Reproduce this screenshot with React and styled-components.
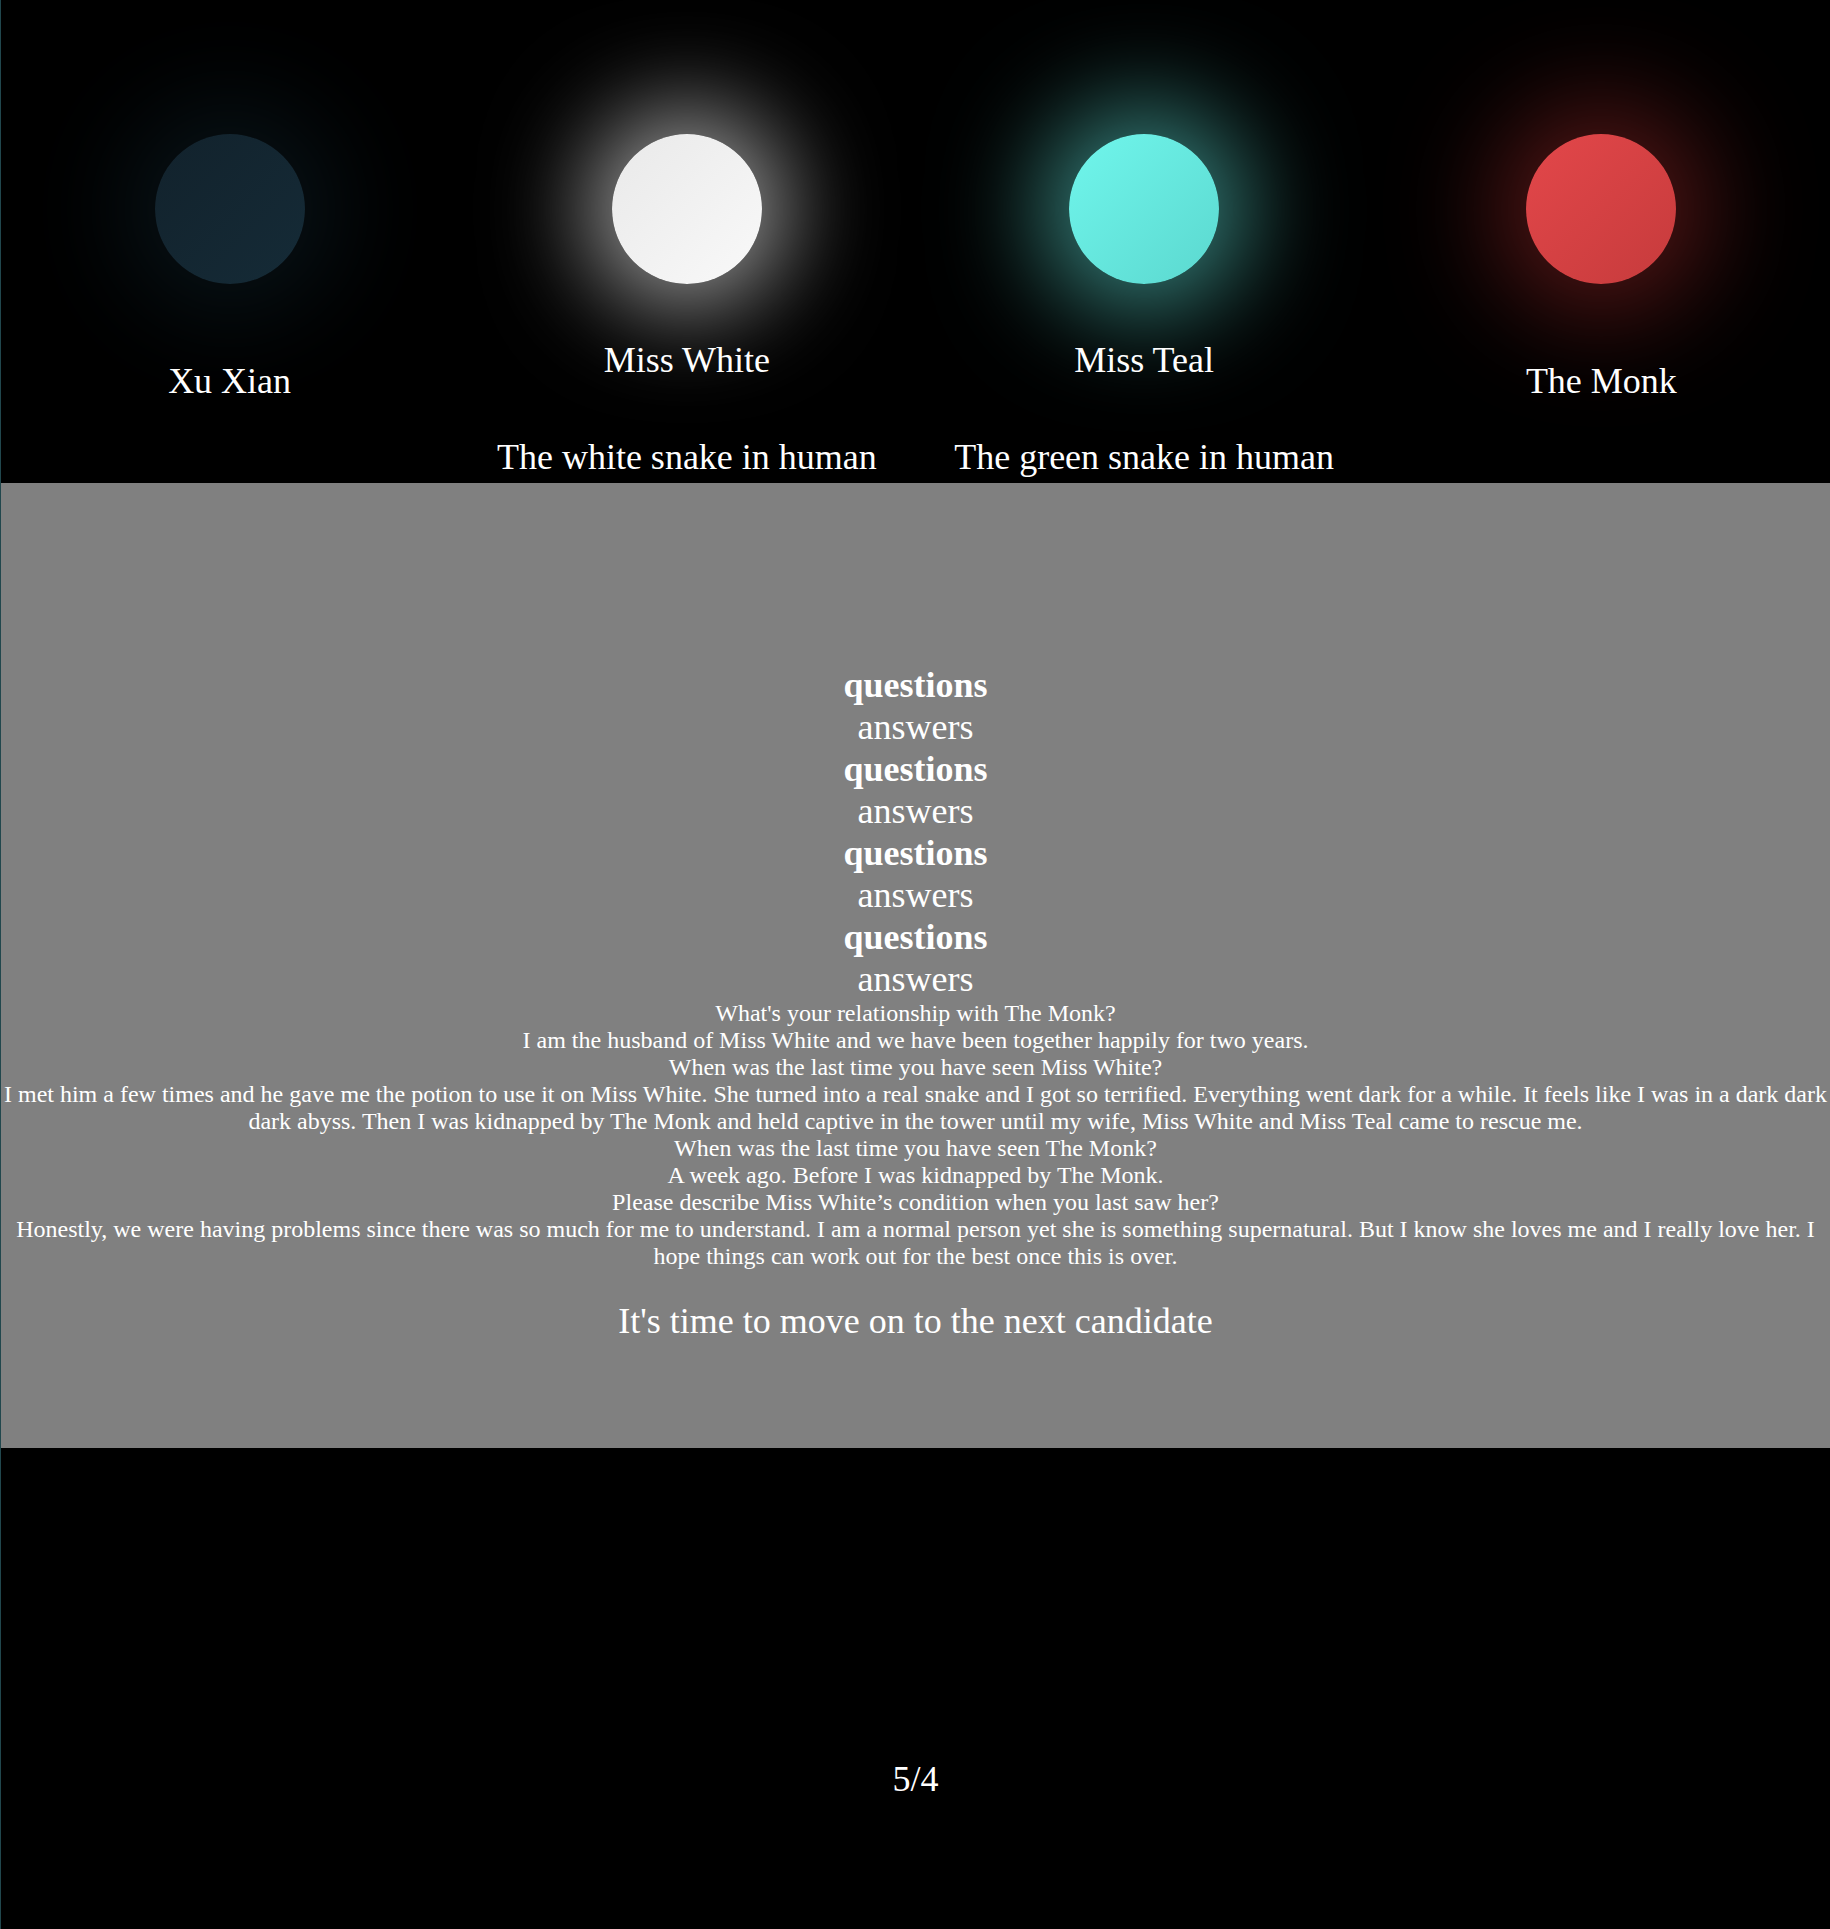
import React from "react";
import styled, { createGlobalStyle } from "styled-components";

const GlobalStyle = createGlobalStyle`
  html, body {
    margin: 0;
    padding: 0;
    background: #000;
  }
  body {
    font-family: "Liberation Serif", "Times New Roman", serif;
    color: #fff;
  }
`;

const Page = styled.div`
  border-left: 1px solid #21474d;
  background: #000;
  min-height: 1929px;
  display: flex;
  flex-direction: column;
`;

const Hero = styled.section`
  display: grid;
  grid-template-columns: repeat(4, 1fr);
  height: 483px;
  background: #000;
  overflow: visible;
`;

const Column = styled.div`
  display: flex;
  flex-direction: column;
  align-items: center;
  padding-top: 134px;
  text-align: center;
`;

const Orb = styled.div`
  width: 150px;
  height: 150px;
  border-radius: 50%;
  background: linear-gradient(135deg, ${(p) => p.$from}, ${(p) => p.$to});
  box-shadow: 0 0 ${(p) => p.$blur}px ${(p) => p.$spread}px ${(p) => p.$glow};
`;

const Name = styled.div`
  font-size: 36px;
  line-height: 41px;
  margin-top: ${(p) => (p.$solo ? 77 : 56)}px;
  white-space: nowrap;
`;

const Desc = styled.div`
  font-size: 36px;
  line-height: 41px;
  margin-top: 56px;
  white-space: nowrap;
`;

const Interview = styled.section`
  background: #808080;
  height: 965px;
  box-sizing: border-box;
  padding-top: 181px;
  text-align: center;
  position: relative;
  z-index: 1;
`;

const Line = styled.div`
  font-size: 36px;
  line-height: 42px;
  font-weight: ${(p) => (p.$bold ? 700 : 400)};
`;

const Transcript = styled.div`
  font-size: 24px;
  line-height: 27px;
  padding: 0 2px;
`;

const NextLine = styled.div`
  font-size: 36px;
  line-height: 41px;
  margin-top: 31px;
`;

const Footer = styled.section`
  background: #000;
  flex: 1;
  min-height: 481px;
  box-sizing: border-box;
  padding-top: 311px;
  text-align: center;
`;

const Counter = styled.div`
  font-size: 36px;
  line-height: 41px;
`;

const characters = [
  {
    name: "Xu Xian",
    from: "#12222c",
    to: "#152b37",
    glow: "rgba(20, 45, 55, 0.45)",
    blur: 110,
    spread: 30,
  },
  {
    name: "Miss White",
    desc: "The white snake in human",
    from: "#e9e9e9",
    to: "#f9f9f9",
    glow: "rgba(255, 255, 255, 0.62)",
    blur: 100,
    spread: 25,
  },
  {
    name: "Miss Teal",
    desc: "The green snake in human",
    from: "#70f6ec",
    to: "#5bd8cf",
    glow: "rgba(95, 225, 215, 0.6)",
    blur: 105,
    spread: 28,
  },
  {
    name: "The Monk",
    from: "#e3474a",
    to: "#c63b3c",
    glow: "rgba(210, 55, 55, 0.42)",
    blur: 110,
    spread: 30,
  },
];

const transcript = [
  "What's your relationship with The Monk?",
  "I am the husband of Miss White and we have been together happily for two years.",
  "When was the last time you have seen Miss White?",
  "I met him a few times and he gave me the potion to use it on Miss White. She turned into a real snake and I got so terrified. Everything went dark for a while. It feels like I was in a dark dark dark abyss. Then I was kidnapped by The Monk and held captive in the tower until my wife, Miss White and Miss Teal came to rescue me.",
  "When was the last time you have seen The Monk?",
  "A week ago. Before I was kidnapped by The Monk.",
  "Please describe Miss White\u2019s condition when you last saw her?",
  "Honestly, we were having problems since there was so much for me to understand. I am a normal person yet she is something supernatural. But I know she loves me and I really love her. I hope things can work out for the best once this is over.",
];

export default function App() {
  return (
    <>
      <GlobalStyle />
      <Page>
        <Hero>
          {characters.map((c) => (
            <Column key={c.name}>
              <Orb
                $from={c.from}
                $to={c.to}
                $glow={c.glow}
                $blur={c.blur}
                $spread={c.spread}
              />
              <Name $solo={!c.desc}>{c.name}</Name>
              {c.desc && <Desc>{c.desc}</Desc>}
            </Column>
          ))}
        </Hero>
        <Interview>
          {[0, 1, 2, 3].map((i) => (
            <React.Fragment key={i}>
              <Line $bold>questions</Line>
              <Line>answers</Line>
            </React.Fragment>
          ))}
          {transcript.map((t, i) => (
            <Transcript key={i}>{t}</Transcript>
          ))}
          <NextLine>It's time to move on to the next candidate</NextLine>
        </Interview>
        <Footer>
          <Counter>5/4</Counter>
        </Footer>
      </Page>
    </>
  );
}
